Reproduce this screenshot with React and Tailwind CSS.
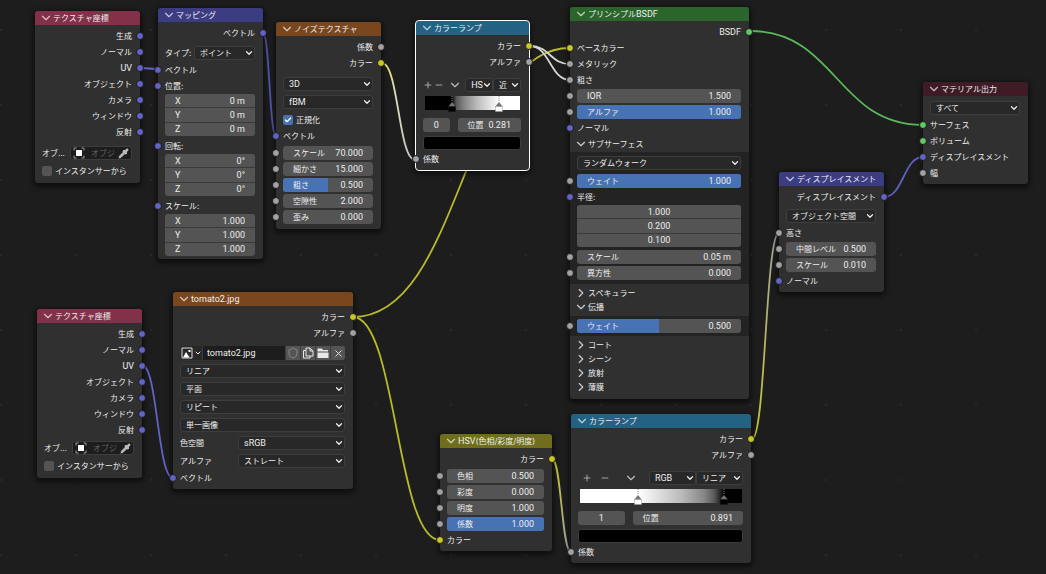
import { useId } from 'react'
import { Check, ChevronDown, ChevronRight, Minus, Pipette, Plus, Shield, X } from 'lucide-react'

const SOCKETS = {
  vector: 'bg-[#6363c7]',
  value: 'bg-[#a1a1a1]',
  color: 'bg-[#c7c729]',
  shader: 'bg-[#63c763]',
}

const LINKS = [
  { from: [140, 68], to: [158, 69], stroke: '#6363c7' },
  { from: [263, 33], to: [276, 136], stroke: '#5555ab' },
  { from: [382, 63], to: [415, 160], stroke: 'url(#fade)' },
  { from: [353, 317], to: [570, 48], stroke: '#b9b92c' },
  { from: [530, 46], to: [570, 64], stroke: '#d6d6d0' },
  { from: [530, 46], to: [570, 80], stroke: '#d6d6d0' },
  { from: [750, 31], to: [923, 125], stroke: '#5bb85b' },
  { from: [884, 197], to: [923, 157], stroke: '#5f5fbd' },
  { from: [752, 439], to: [779, 233], stroke: 'url(#rise)' },
  { from: [552, 459], to: [571, 552], stroke: 'url(#drop)' },
  { from: [353, 317], to: [440, 540], stroke: '#b9b92c' },
  { from: [142, 365], to: [173, 478], stroke: '#6363c7' },
]

const OUTPUTS = ['生成', 'ノーマル', 'UV', 'オブジェクト', 'カメラ', 'ウィンドウ', '反射']

// latin text and digits are set one step larger than the kana
const LATIN = "font-['Roboto','Noto_Sans_CJK_JP',sans-serif] text-[9px]"
const isLatin = s => /^[\w .°]+$/.test(s)

function Text({ children }) {
  return <span className={isLatin(children) ? LATIN : ''}>{children}</span>
}

function linkPath([x1, y1], [x2, y2]) {
  const h = (x2 - x1) / 2
  return `M${x1} ${y1}C${x1 + h} ${y1} ${x2 - h} ${y2} ${x2} ${y2}`
}

function Links() {
  return (
    <svg className="absolute inset-0 w-full h-full pointer-events-none" fill="none" strokeWidth="1.8">
      <defs>
        <linearGradient id="fade" x1="0" y1="0" x2="0" y2="1">
          <stop offset="0" stopColor="#d8d86a" />
          <stop offset="0.3" stopColor="#e0e0bc" />
          <stop offset="1" stopColor="#c4c4c4" />
        </linearGradient>
        <linearGradient id="rise" x1="0" y1="1" x2="0" y2="0">
          <stop offset="0" stopColor="#c7c729" />
          <stop offset="1" stopColor="#a1a1a1" />
        </linearGradient>
        <linearGradient id="drop" x1="0" y1="0" x2="0" y2="1">
          <stop offset="0" stopColor="#c7c729" />
          <stop offset="1" stopColor="#a1a1a1" />
        </linearGradient>
      </defs>
      {LINKS.map((l, i) => <path key={i} d={linkPath(l.from, l.to)} stroke={l.stroke} />)}
    </svg>
  )
}

function Node({ title, place, color, selected, children }) {
  return (
    <section className={`absolute ${place} rounded-[3px] bg-[#303030] shadow-[0_2px_5px_2px_rgba(0,0,0,0.5)] ${selected ? 'outline outline-white' : ''}`}>
      <button className={`flex items-center w-full h-[14px] pl-1 rounded-t-[3px] whitespace-nowrap ${color}`}>
        <ChevronDown className="size-[14px] text-white/70" />
        {title}
      </button>
      <div className="py-[3px]">{children}</div>
    </section>
  )
}

function Row({ input, output, tall, className = '', children }) {
  return (
    <div className={`relative flex items-center pl-[7px] pr-2 whitespace-nowrap ${tall ? 'h-[18px]' : 'h-4'} ${output ? 'justify-end' : ''} ${className}`}>
      {input && <i className={`absolute -left-1 top-1 size-2 rounded-full border border-[#1a1a1a] ${SOCKETS[input]}`} />}
      {children}
      {output && <i className={`absolute -right-1 top-1 size-2 rounded-full border border-[#1a1a1a] ${SOCKETS[output]}`} />}
    </div>
  )
}

function Num({ label, value, fill = 0, name, className = 'flex-1' }) {
  return (
    <label className={`relative flex items-center min-w-0 h-[14px] rounded-[3px] bg-[#545454] overflow-hidden ${label ? 'px-[10px]' : 'px-1'} ${className}`}>
      {fill > 0 && <span className="absolute inset-y-0 left-0 bg-[#4772b3]" style={{ width: `${fill * 100}%` }} />}
      {label && <span className="relative"><Text>{label}</Text></span>}
      <input
        className={`relative flex-1 w-0 min-w-0 bg-transparent outline-none ${LATIN} ${label ? 'text-right' : 'text-center'}`}
        defaultValue={value}
        aria-label={label ? undefined : name}
      />
    </label>
  )
}

function Vector({ labels, values, name }) {
  return (
    <div className="grid grid-rows-3 gap-px h-[42px] ml-[7px] mr-2 rounded-[3px] bg-[#3a3a3a] overflow-hidden">
      {values.map((v, i) => (
        <label key={i} className="flex items-center px-[10px] bg-[#545454]">
          {labels && <Text>{labels[i]}</Text>}
          <input
            className={`flex-1 w-0 min-w-0 bg-transparent outline-none ${LATIN} ${labels ? 'text-right' : 'text-center'}`}
            defaultValue={v}
            aria-label={labels ? undefined : `${name} ${i + 1}`}
          />
        </label>
      ))}
    </div>
  )
}

function Select({ value, name, id, className = 'flex-1' }) {
  return (
    <div className={`relative min-w-0 ${className}`}>
      <select id={id} aria-label={name} className={`block w-full h-[14px] pl-[5px] pr-2 appearance-none rounded-[3px] border border-[#3d3d3d] bg-[#282828] outline-none ${isLatin(value) ? LATIN : ''}`}>
        <option>{value}</option>
      </select>
      <ChevronDown className="absolute right-px top-[2px] size-[10px] pointer-events-none" strokeWidth={3} />
    </div>
  )
}

function Tick({ label, checked }) {
  return (
    <label className="flex items-center gap-[3px]">
      <span className="relative size-[10px]">
        <input type="checkbox" defaultChecked={checked} className="peer block size-[10px] appearance-none rounded-[2px] bg-[#545454] checked:bg-[#4772b3]" />
        <Check className="absolute left-px top-px size-2 text-white opacity-0 peer-checked:opacity-100 pointer-events-none" strokeWidth={4} />
      </span>
      {label}
    </label>
  )
}

function Toggle({ label, open }) {
  const Icon = open ? ChevronDown : ChevronRight
  return (
    <button className="flex items-center w-full h-[14px] pl-1">
      <Icon className="size-[14px] text-[#ccc]" />
      {label}
    </button>
  )
}

function TextureCoordinate({ place, gap }) {
  const id = useId()
  return (
    <Node title="テクスチャ座標" place={place} color="bg-[#83314a]">
      {OUTPUTS.map(o => <Row key={o} output="vector"><Text>{o}</Text></Row>)}
      <Row tall className={gap}>
        <label htmlFor={id} className="w-7 shrink-0">オブ...</label>
        <div className="flex items-center flex-1 min-w-0 h-[14px] px-[2px] rounded-[3px] border border-[#3d3d3d] bg-[#1d1d1d]">
          <svg viewBox="0 0 12 12" className="size-3 shrink-0" fill="none" stroke="#9a9a9a">
            <path d="M1 3.5V1h2.5M8.500 1H11v2.500M11 8.500V11H8.500M3.500 11H1V8.500" />
            <rect x="3" y="3" width="6" height="6" fill="#fff" stroke="none" />
          </svg>
          <input id={id} placeholder="オブジ" className="flex-1 w-0 min-w-0 ml-[6px] bg-transparent outline-none placeholder:text-[#666]" />
          <button aria-label="スポイト"><Pipette className="size-[11px] fill-[#bbb] text-[#ccc]" /></button>
        </div>
      </Row>
      <Row tall><Tick label="インスタンサーから" /></Row>
    </Node>
  )
}

function Stop({ at, color }) {
  return (
    <svg viewBox="0 0 8 16" className="absolute top-0 w-2 h-4 -ml-1" style={{ left: `${at * 100}%` }}>
      <path d="M4 0v6" stroke="#888" strokeDasharray="1 1" />
      <path d="M0 11L4 6l4 5z" fill="#757575" />
      <rect x="0.500" y="10.500" width="7" height="5" fill={color} stroke={color === '#000' ? '#111' : '#999'} strokeWidth="0.500" />
    </svg>
  )
}

function ColorRamp({ place, selected, mode, interp, gradient, stops, index, position }) {
  return (
    <Node title="カラーランプ" place={place} color="bg-[#246283]" selected={selected}>
      <Row output="color">カラー</Row>
      <Row output="value">アルファ</Row>
      <div className="flex items-center mt-2 pl-[7px] pr-2">
        <div className="flex items-center w-[43%] text-[#bbb]">
          <button aria-label="追加" className="flex flex-1 justify-center"><Plus className="size-[10px]" /></button>
          <button aria-label="削除" className="flex flex-1 justify-center"><Minus className="size-[10px]" /></button>
          <button aria-label="ツール" className="flex flex-[2] justify-center"><ChevronDown className="size-[14px]" /></button>
        </div>
        <Select value={mode} name="カラーモード" />
        <Select value={interp} name="補間" />
      </div>
      <div className={`relative h-[14px] mx-[9px] mt-1 ${gradient}`}>
        {stops.map(s => <Stop key={s.at} {...s} />)}
      </div>
      <div className="flex gap-2 mt-2 pl-[7px] pr-2">
        <Num value={index} name="カラーストップ" className="flex-[3]" />
        <Num label="位置" value={position} className="flex-[7]" />
      </div>
      <div className="mt-1 pl-[7px] pr-2">
        <button aria-label="カラー" className="block w-full h-[14px] rounded-[3px] border border-[#3d3d3d] bg-black" />
      </div>
      <Row input="value" className="mt-px">係数</Row>
    </Node>
  )
}

function ImageTexture() {
  const box = 'flex items-center justify-center w-[14px] h-[14px] bg-[#545454]'
  return (
    <Node title={<Text>tomato2.jpg</Text>} place="left-[173px] top-[292px] w-[180px]" color="bg-[#79461d]">
      <Row output="color">カラー</Row>
      <Row output="value">アルファ</Row>
      <Row tall className="mt-[3px]">
        <div className="flex flex-1 min-w-0 h-[14px] gap-px rounded-[3px] bg-[#3d3d3d] overflow-hidden">
          <button aria-label="画像を選択" className="flex items-center justify-center gap-px w-[22px] bg-[#282828]">
            <svg viewBox="0 0 12 12" className="size-3" fill="none">
              <path d="M1 1h10v10H1z" stroke="#ddd" />
              <path d="M2 10.500L5 5l3.500 5.500z" fill="#fff" />
              <path d="M7.500 3h2v2h-2z" fill="#fff" />
            </svg>
            <ChevronDown className="size-2" strokeWidth={3} />
          </button>
          <input aria-label="画像名" defaultValue="tomato2.jpg" className={`flex-1 w-0 min-w-0 px-1 bg-[#1d1d1d] outline-none ${LATIN}`} />
          <button aria-label="フェイクユーザー" className={box}><Shield className="size-3 text-[#8a8a8a]" /></button>
          <button aria-label="複製" className={box}>
            <svg viewBox="0 0 12 12" className="size-3" fill="none" stroke="#e6e6e6">
              <path d="M4 1h4l3 3v5H4zM8 1v3h3M4 3.500H1.500V11H8V9" />
            </svg>
          </button>
          <button aria-label="開く" className={box}>
            <svg viewBox="0 0 12 12" className="size-3" fill="#e6e6e6">
              <path d="M0.500 1.500h4.500l1 1.500h5v1.500H0.500zM0.500 5.500h11V11h-11z" />
            </svg>
          </button>
          <button aria-label="リンク解除" className={box}><X className="size-[11px]" /></button>
        </div>
      </Row>
      <Row tall><Select value="リニア" name="補間" /></Row>
      <Row tall><Select value="平面" name="投影" /></Row>
      <Row tall><Select value="リピート" name="延長" /></Row>
      <Row tall><Select value="単一画像" name="ソース" /></Row>
      <Row tall>
        <label htmlFor="space" className="w-[58px]">色空間</label>
        <Select id="space" value="sRGB" />
      </Row>
      <Row tall>
        <label htmlFor="alpha" className="w-[58px]">アルファ</label>
        <Select id="alpha" value="ストレート" />
      </Row>
      <Row input="vector">ベクトル</Row>
    </Node>
  )
}

function Mapping() {
  const xyz = ['X', 'Y', 'Z']
  return (
    <Node title="マッピング" place="left-[158px] top-[8px] w-[105px]" color="bg-[#3c3c83]">
      <Row output="vector">ベクトル</Row>
      <Row tall className="mt-[3px]">
        <label htmlFor="type" className="w-[29px]">タイプ:</label>
        <Select id="type" value="ポイント" />
      </Row>
      <Row input="vector">ベクトル</Row>
      <Row input="vector">位置:</Row>
      <Vector labels={xyz} values={['0 m', '0 m', '0 m']} />
      <Row input="vector" className="mt-[2px]">回転:</Row>
      <Vector labels={xyz} values={['0°', '0°', '0°']} />
      <Row input="vector" className="mt-[2px]">スケール:</Row>
      <Vector labels={xyz} values={['1.000', '1.000', '1.000']} />
    </Node>
  )
}

function NoiseTexture() {
  return (
    <Node title="ノイズテクスチャ" place="left-[276px] top-[22px] w-[105px]" color="bg-[#79461d]">
      <Row output="value">係数</Row>
      <Row output="color">カラー</Row>
      <Row tall className="mt-1"><Select value="3D" name="次元" /></Row>
      <Row tall><Select value="fBM" name="ノイズタイプ" /></Row>
      <Row className="mt-px"><Tick label="正規化" checked /></Row>
      <Row input="vector">ベクトル</Row>
      <div className="py-px">
        <Row input="value"><Num label="スケール" value="70.000" /></Row>
        <Row input="value"><Num label="細かさ" value="15.000" /></Row>
        <Row input="value"><Num label="粗さ" value="0.500" fill={0.5} /></Row>
        <Row input="value"><Num label="空隙性" value="2.000" /></Row>
        <Row input="value"><Num label="歪み" value="0.000" /></Row>
      </div>
    </Node>
  )
}

function Principled() {
  return (
    <Node title={<>プリンシプル<Text>BSDF</Text></>} place="left-[570px] top-[7px] w-[179px]" color="bg-[#2b652b]">
      <Row output="shader"><Text>BSDF</Text></Row>
      <Row input="color">ベースカラー</Row>
      <Row input="value">メタリック</Row>
      <Row input="value">粗さ</Row>
      <Row input="value"><Num label="IOR" value="1.500" /></Row>
      <Row input="value"><Num label="アルファ" value="1.000" fill={1} /></Row>
      <Row input="vector">ノーマル</Row>
      <div className="py-px">
        <Toggle label="サブサーフェス" open />
      </div>
      <div className="pt-[2px] pb-[3px] bg-[#232323]">
        <Row tall><Select value="ランダムウォーク" name="サブサーフェス方式" /></Row>
        <Row input="value" className="mt-px"><Num label="ウェイト" value="1.000" fill={1} /></Row>
        <Row input="vector">半径:</Row>
        <Vector values={['1.000', '0.200', '0.100']} name="半径" />
        <Row input="value" className="mt-[2px]"><Num label="スケール" value="0.05 m" /></Row>
        <Row input="value"><Num label="異方性" value="0.000" /></Row>
      </div>
      <div className="py-[2px]">
        <Toggle label="スペキュラー" />
        <Toggle label="伝播" open />
      </div>
      <div className="py-[2px] bg-[#232323]">
        <Row input="value"><Num label="ウェイト" value="0.500" fill={0.5} /></Row>
      </div>
      <div className="py-[2px]">
        <Toggle label="コート" />
        <Toggle label="シーン" />
        <Toggle label="放射" />
        <Toggle label="薄膜" />
      </div>
    </Node>
  )
}

function MaterialOutput() {
  return (
    <Node title="マテリアル出力" place="left-[923px] top-[82px] w-[105px]" color="bg-[#3f1b26]">
      <Row tall><Select value="すべて" name="ターゲット" /></Row>
      <Row input="shader">サーフェス</Row>
      <Row input="shader">ボリューム</Row>
      <Row input="vector">ディスプレイスメント</Row>
      <Row input="value">幅</Row>
    </Node>
  )
}

function Displacement() {
  return (
    <Node title="ディスプレイスメント" place="left-[779px] top-[172px] w-[105px]" color="bg-[#3c3c83]">
      <Row output="vector">ディスプレイスメント</Row>
      <Row tall className="mt-[2px]"><Select value="オブジェクト空間" name="空間" /></Row>
      <Row input="value">高さ</Row>
      <Row input="value"><Num label="中間レベル" value="0.500" /></Row>
      <Row input="value"><Num label="スケール" value="0.010" /></Row>
      <Row input="vector">ノーマル</Row>
    </Node>
  )
}

function HueSaturation() {
  return (
    <Node title={<><Text>HSV</Text>(色相/彩度/明度)</>} place="left-[440px] top-[434px] w-[112px]" color="bg-[#6e6e1d]">
      <Row output="color">カラー</Row>
      <Row input="value" className="mt-px"><Num label="色相" value="0.500" /></Row>
      <Row input="value"><Num label="彩度" value="0.000" /></Row>
      <Row input="value"><Num label="明度" value="1.000" /></Row>
      <Row input="value"><Num label="係数" value="1.000" fill={1} /></Row>
      <Row input="color">カラー</Row>
    </Node>
  )
}

export default function App() {
  return (
    <main className="relative w-full min-h-screen overflow-hidden bg-[#1d1d1d] bg-[radial-gradient(circle_at_1px_30px,#282828_1px,transparent_1px)] bg-[size:75px_75px] font-['Inter','Noto_Sans_CJK_JP',sans-serif] text-[8px] leading-[12px] text-[#eee]">
      <Links />
      <TextureCoordinate place="left-[35px] top-[11px] w-[105px]" gap="mt-1" />
      <Mapping />
      <NoiseTexture />
      <ColorRamp
        place="left-[416px] top-[21px] w-[113px]"
        selected
        mode="HS"
        interp="近"
        gradient="bg-[linear-gradient(90deg,#000_28%,#595959_33%,#898989_42%,#bcbcbc_55%,#fff_78%)]"
        stops={[{ at: 0.281, color: '#000' }, { at: 0.78, color: '#fff' }]}
        index="0"
        position="0.281"
      />
      <Principled />
      <MaterialOutput />
      <Displacement />
      <TextureCoordinate place="left-[37px] top-[309px] w-[105px]" gap="mt-px" />
      <ImageTexture />
      <HueSaturation />
      <ColorRamp
        place="left-[571px] top-[414px] w-[180px]"
        mode="RGB"
        interp="リニア"
        gradient="bg-[linear-gradient(90deg,#fff_36%,#bcbcbc_62%,#898989_76%,#595959_83%,#000_89%)]"
        stops={[{ at: 0.36, color: '#fff' }, { at: 0.891, color: '#000' }]}
        index="1"
        position="0.891"
      />
    </main>
  )
}
